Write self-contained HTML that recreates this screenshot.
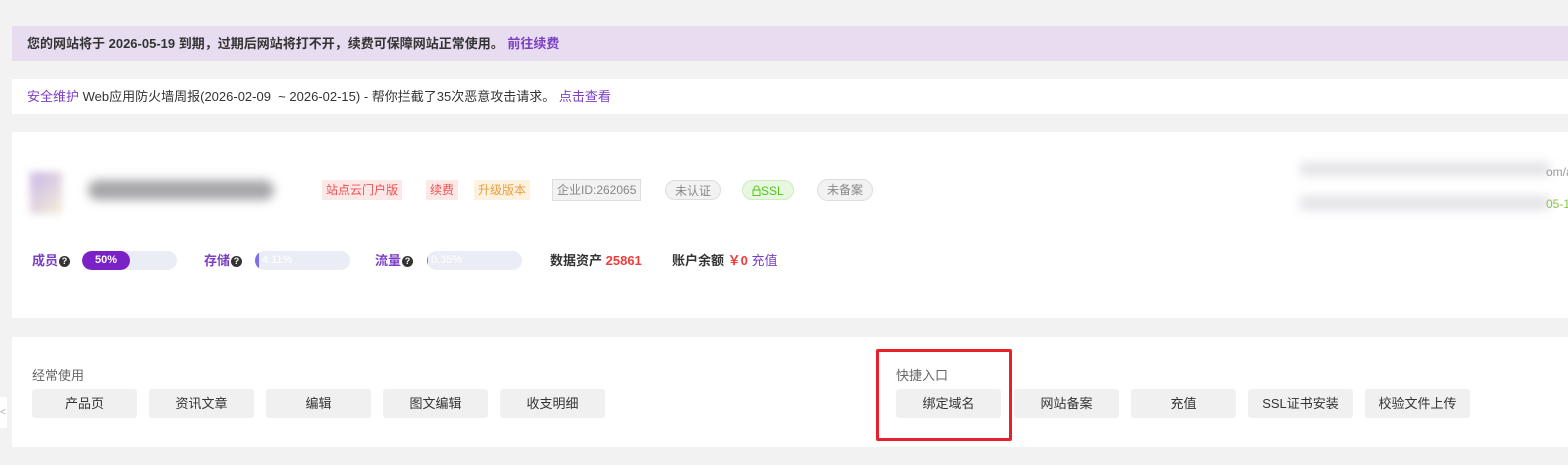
<!DOCTYPE html>
<html><head><meta charset="utf-8"><style>
*{margin:0;padding:0;box-sizing:border-box}
body{width:1568px;height:465px;background:#f2f2f2;font-family:"Liberation Sans","Noto Sans CJK SC",sans-serif;font-size:13px;color:#333;position:relative;overflow:hidden}
.abs{position:absolute}
.b1{left:12px;top:26px;width:1556px;height:35px;background:#e8dcf0;font-weight:bold;padding-left:15px;line-height:35px;color:#333}
.b2{left:12px;top:79px;width:1556px;height:35px;background:#fff;padding-left:15px;line-height:35px}
.pur{color:#7a3fc4}
.card{left:12px;top:132px;width:1556px;height:186px;background:#fff}
.card2{left:12px;top:337px;width:1556px;height:110px;background:#fff}
.tag{position:absolute;top:180px;height:20px;line-height:20px;font-size:12px;padding:0 4px;white-space:nowrap}
.btn{position:absolute;top:389px;width:105px;height:29px;background:#f0f0f0;border-radius:3px;text-align:center;line-height:29px;font-size:13px;color:#333}
.lbl{position:absolute;top:252px;font-weight:bold;color:#7a3fc4;font-size:13px;line-height:18px;white-space:nowrap}
.q{display:inline-block;width:11px;height:11px;border-radius:50%;background:#333;color:#fff;font-size:9px;line-height:11px;text-align:center;vertical-align:1px;margin-left:1px}
.bar{position:absolute;top:251px;width:95px;height:19px;border-radius:10px;background:#eaedf5;overflow:hidden;color:#fff;font-size:11px;line-height:19px}
</style></head><body>
<div class="abs b1">您的网站将于 2026-05-19 到期，过期后网站将打不开，续费可保障网站正常使用。 <span class="pur">前往续费</span></div>
<div class="abs b2"><span class="pur">安全维护</span> Web应用防火墙周报(2026-02-09 &nbsp;~ 2026-02-15) - 帮你拦截了35次恶意攻击请求。 <span class="pur">点击查看</span></div>
<div class="abs card"></div>
<div class="abs" style="left:30px;top:172px;width:32px;height:42px;background:linear-gradient(135deg,#c8b6e8,#f6eed8);filter:blur(4px)"></div>
<div class="abs" style="left:88px;top:180px;width:186px;height:20px;background:#a6a6aa;border-radius:10px;filter:blur(5px)"></div>
<div class="tag" style="left:322px;background:#fde8e8;color:#f05050">站点云门户版</div>
<div class="tag" style="left:426px;background:#fde8e8;color:#f05050">续费</div>
<div class="tag" style="left:474px;background:#fdf1e0;color:#e8a040">升级版本</div>
<div class="tag" style="left:552px;background:#f2f2f2;border:1px solid #ddd;color:#888;height:22px;top:179px">企业ID:262065</div>
<div class="tag" style="left:665px;background:#f2f2f2;border:1px solid #ddd;border-radius:10px;color:#888;padding:0 9px">未认证</div>
<div class="tag" style="left:742px;background:#e8f7e0;border:1px solid #cfeebb;border-radius:10px;color:#52c41a;padding:0 9px"><svg width="9" height="11" viewBox="0 0 9 11" style="vertical-align:-1px"><path d="M2 5V3.5a2.5 2.5 0 0 1 5 0V5" fill="none" stroke="#52c41a"/><rect x="1" y="5" width="7" height="5.5" fill="none" stroke="#52c41a"/></svg>SSL</div>
<div class="tag" style="left:817px;background:#f2f2f2;border:1px solid #ddd;border-radius:11px;color:#888;padding:0 9px;height:22px;top:179px">未备案</div>
<div class="abs" style="left:1300px;top:162px;width:250px;height:14px;background:#e4e4e8;filter:blur(5px)"></div>
<div class="abs" style="left:1300px;top:196px;width:250px;height:14px;background:#e4e4e8;filter:blur(5px)"></div>
<div class="abs" style="left:1546px;top:165px;font-size:12px;color:#999;white-space:nowrap">om/a</div>
<div class="abs" style="left:1546px;top:197px;font-size:12px;color:#8bc34a;white-space:nowrap">05-19</div>
<div class="lbl" style="left:32px">成员<span class="q">?</span></div>
<div class="bar" style="left:82px"><div style="width:48px;height:19px;background:#7b22c6;border-radius:10px;text-align:center;font-weight:bold">50%</div></div>
<div class="lbl" style="left:204px">存储<span class="q">?</span></div>
<div class="bar" style="left:255px"><div style="width:4px;height:19px;background:#7b6ee8;display:inline-block;vertical-align:top"></div> 4.11%</div>
<div class="lbl" style="left:375px">流量<span class="q">?</span></div>
<div class="bar" style="left:427px"><div style="width:1px;height:19px;background:#7b6ee8;display:inline-block;vertical-align:top"></div> 0.35%</div>
<div class="lbl" style="left:550px;color:#333">数据资产 <span style="color:#f03c3c">25861</span></div>
<div class="lbl" style="left:672px;color:#333">账户余额 <span style="color:#f03c3c">￥0</span> <span style="color:#7a3fc4;font-weight:normal">充值</span></div>
<div class="abs card2"></div>
<div class="abs" style="left:0;top:397px;width:7px;height:31px;background:#fff;font-size:10px;color:#aaa;line-height:31px">&lt;</div>
<div class="abs" style="left:32px;top:365px;color:#666">经常使用</div>
<div class="btn" style="left:32px">产品页</div>
<div class="btn" style="left:149px">资讯文章</div>
<div class="btn" style="left:266px">编辑</div>
<div class="btn" style="left:383px">图文编辑</div>
<div class="btn" style="left:500px">收支明细</div>
<div class="abs" style="left:896px;top:365px;color:#666">快捷入口</div>
<div class="btn" style="left:896px">绑定域名</div>
<div class="btn" style="left:1014px">网站备案</div>
<div class="btn" style="left:1131px">充值</div>
<div class="btn" style="left:1248px">SSL证书安装</div>
<div class="btn" style="left:1365px">校验文件上传</div>
<div class="abs" style="left:876px;top:349px;width:136px;height:92px;border:3px solid #e8202a;border-radius:2px"></div>
</body></html>
